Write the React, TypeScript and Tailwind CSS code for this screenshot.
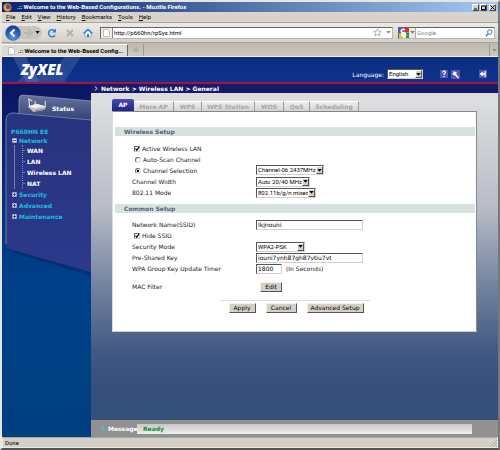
import { useState } from "react";
import type { ReactNode } from "react";
import clsx from "clsx";

const TABS = [
  { label: "More AP", width: "w-[40px]" },
  { label: "WPS", width: "w-[28px]" },
  { label: "WPS Station", width: "w-[53px]" },
  { label: "WDS", width: "w-[29px]" },
  { label: "QoS", width: "w-[26px]" },
  { label: "Scheduling", width: "w-[49px]" },
];

const MENU = ["File", "Edit", "View", "History", "Bookmarks", "Tools", "Help"];
const NETWORK_LINKS = ["WAN", "LAN", "Wireless LAN", "NAT"];
const SECTIONS = ["Security", "Advanced", "Maintenance"];

const FIELD =
  "h-[10px] border border-[#d4d0c8] border-t-[#555] border-l-[#555] bg-white pl-px text-[6px] leading-[8px] text-black outline-none";
const WINDOW_BUTTON =
  "h-[7px] w-[7px] border border-white border-r-[#444] border-b-[#444] bg-[#d4d0c8]";

function Caret({ className }: { className?: string }) {
  return (
    <svg viewBox="0 0 5 3" className={clsx("h-[3px] w-[5px]", className)}>
      <path d="M.3 0h4.400L2.500 2.800z" fill="currentColor" />
    </svg>
  );
}

function PageIcon() {
  return (
    <svg viewBox="0 0 7 8" className="h-[8px] w-[7px] shrink-0">
      <path d="M.5.5h4l2 2v5h-6z" fill="#fff" stroke="#aaa" strokeWidth=".7" />
    </svg>
  );
}

function Select({
  label,
  options,
  className,
}: {
  label: string;
  options: string[];
  className: string;
}) {
  return (
    <span className={clsx("relative inline-flex h-[10px] shrink-0", className)}>
      <select
        aria-label={label}
        className="h-full w-full appearance-none border border-[#d4d0c8] border-t-[#555] border-l-[#555] bg-white pl-px font-[Roboto,sans-serif] text-[6px] leading-[8px] text-black outline-none"
      >
        {options.map((o) => (
          <option key={o}>{o}</option>
        ))}
      </select>
      <span className="pointer-events-none absolute top-px right-px bottom-px flex w-[7px] items-center justify-center border border-white border-r-[#555] border-b-[#555] bg-[#d4d0c8] text-black">
        <Caret />
      </span>
    </span>
  );
}

function Tick({ label }: { label: string }) {
  const [checked, setChecked] = useState(true);
  return (
    <label className="flex h-[11px] items-center gap-[2px] pl-[2px]">
      <span className="grid">
        <input
          type="checkbox"
          checked={checked}
          onChange={(e) => setChecked(e.target.checked)}
          className="col-start-1 row-start-1 h-[6px] w-[6px] appearance-none border border-[#d4d0c8] border-t-[#666] border-l-[#666] bg-white"
        />
        {checked && (
          <svg viewBox="0 0 6 6" className="pointer-events-none col-start-1 row-start-1 h-[6px] w-[6px]">
            <path d="M1.5 2.500l1.200 1.700L5 1.200" fill="none" stroke="#000" strokeWidth="1.100" />
          </svg>
        )}
      </span>
      {label}
    </label>
  );
}

function Radio({
  label,
  checked,
  onChange,
}: {
  label: string;
  checked: boolean;
  onChange: () => void;
}) {
  return (
    <label className="flex h-[11px] w-[124px] items-center gap-[2px] pl-[3px]">
      <span className="grid">
        <input
          type="radio"
          name="channel"
          checked={checked}
          onChange={onChange}
          className="col-start-1 row-start-1 h-[6px] w-[6px] appearance-none rounded-full border border-[#ddd] border-t-[#666] border-l-[#666] bg-white"
        />
        {checked && (
          <svg viewBox="0 0 6 6" className="pointer-events-none col-start-1 row-start-1 h-[6px] w-[6px]">
            <circle cx="3" cy="3" r="1.200" fill="#000" />
          </svg>
        )}
      </span>
      {label}
    </label>
  );
}

function Row({ label, id, children }: { label: string; id?: string; children: ReactNode }) {
  return (
    <div className="flex h-[11px] items-center">
      <label htmlFor={id} className="w-[124px] shrink-0">
        {label}
      </label>
      {children}
    </div>
  );
}

function SectionTitle({ children }: { children: ReactNode }) {
  return (
    <h2 className="mr-px ml-[2px] h-[9px] bg-[#d8e0e0] pl-[9px] text-[6px] leading-[9px] font-bold text-[#50647a]">
      {children}
    </h2>
  );
}

function Button({ children, className }: { children: ReactNode; className: string }) {
  return (
    <button
      type="button"
      className={clsx(
        "h-[10px] border border-[#f2f0ea] border-r-[#555] border-b-[#555] bg-[#d4d0c8] text-center text-[6px] leading-[8px] whitespace-nowrap text-black",
        className,
      )}
    >
      {children}
    </button>
  );
}

function BrowserChrome() {
  return (
    <header className="font-[Roboto,sans-serif] text-[6px] text-black">
      <div className="flex h-[10px] items-center bg-linear-to-r from-[#0a246a] to-[#a6caf0] pr-[2px] pl-px text-white">
        <svg viewBox="0 0 10 10" className="mr-[5px] h-[9px] w-[9px]">
          <circle cx="5" cy="5" r="4.600" fill="#e77817" />
          <circle cx="5.400" cy="4.600" r="2.800" fill="#315ca5" />
          <path d="M1 3c1-1 2 .3 3 .2L3 5c1 2 3 2 5 1-2 4-7 3-7-3z" fill="#f8a43a" />
        </svg>
        <h1 className="flex-1 text-[6px] leading-[10px] font-bold">
          .:: Welcome to the Web-Based Configurations. - Mozilla Firefox
        </h1>
        <div className="flex gap-px">
          <button type="button" aria-label="Minimize" className={WINDOW_BUTTON}>
            <svg viewBox="0 0 5 5" className="h-[5px] w-[5px]"><path d="M1 4h3" stroke="#000" /></svg>
          </button>
          <button type="button" aria-label="Maximize" className={WINDOW_BUTTON}>
            <svg viewBox="0 0 5 5" className="h-[5px] w-[5px]"><path d="M.5 1h4v3.500h-4z" fill="none" stroke="#000" /></svg>
          </button>
          <button type="button" aria-label="Close" className={clsx(WINDOW_BUTTON, "ml-px")}>
            <svg viewBox="0 0 5 5" className="h-[5px] w-[5px]"><path d="M.5.5l4 4m0-4l-4 4" stroke="#000" /></svg>
          </button>
        </div>
      </div>

      <nav className="flex h-[11px] items-center gap-[6px] border-b border-[#aaa69e] bg-[#d8d4cc] pl-[4px] leading-[10px]">
        {MENU.map((m) => (
          <button type="button" key={m}>
            <u>{m[0]}</u>
            {m.slice(1)}
          </button>
        ))}
      </nav>

      <div className="flex h-[19px] items-center bg-linear-to-b from-[#eceae6] to-[#d4d0c8] pr-[3px] pl-[3px]">
        <div className="flex h-[13px] items-center rounded-full bg-[#c8c5be] pr-[2px]">
          <button type="button" aria-label="Back">
            <svg viewBox="0 0 16 16" className="h-[16px] w-[16px]">
              <defs>
                <radialGradient id="back" cx="50%" cy="80%" r="75%">
                  <stop offset="0" stopColor="#4a9be8" />
                  <stop offset="1" stopColor="#1735a0" />
                </radialGradient>
              </defs>
              <circle cx="8" cy="8" r="7.500" fill="url(#back)" stroke="#6277b5" strokeWidth=".6" />
              <path d="M9.500 4.500L6 8l3.500 3.500" fill="none" stroke="#fff" strokeWidth="2" />
            </svg>
          </button>
          <button type="button" aria-label="Forward" className="ml-px">
            <svg viewBox="0 0 12 10" className="h-[10px] w-[12px]">
              <path d="M6 1.500L10 5 6 8.500M10 5H2" fill="none" stroke="#b9b7b1" strokeWidth="1.800" />
            </svg>
          </button>
          <Caret className="ml-px" />
        </div>
        <button type="button" aria-label="Reload" className="ml-[5px]">
          <svg viewBox="0 0 10 10" className="h-[10px] w-[10px]">
            <path d="M8 7.200A3.500 3.500 0 1 1 7.300 2.500" fill="none" stroke="#2f7fd8" strokeWidth="1.600" />
            <path d="M9 .5v4H5z" fill="#2f7fd8" />
          </svg>
        </button>
        <button type="button" aria-label="Stop" className="ml-[8px]">
          <svg viewBox="0 0 10 10" className="h-[10px] w-[10px]">
            <path d="M2 2l6 6m0-6L2 8" stroke="#b3b0a9" strokeWidth="1.800" />
          </svg>
        </button>
        <button type="button" aria-label="Home" className="mr-[7px] ml-[8px]">
          <svg viewBox="0 0 10 10" className="h-[10px] w-[10px]">
            <path d="M2 5v4h6V5L5 2z" fill="#f4f8ff" stroke="#79a5dc" strokeWidth=".8" />
            <path d="M.6 5.500L5 1.500l4.400 4" fill="none" stroke="#2f78cc" strokeWidth="1.500" />
            <path d="M4 6h2v3H4z" fill="#2f78cc" />
          </svg>
        </button>
        <div className="flex h-[12px] flex-1 items-center border border-[#bbb8b0] border-t-[#666] border-l-[#666] bg-white">
          <span className="flex h-full w-[12px] items-center justify-center border-r border-[#888] bg-[#eceae6]">
            <PageIcon />
          </span>
          <input
            aria-label="Address"
            defaultValue="http://p660hn/rpSys.html"
            className="h-full min-w-0 flex-1 pl-px text-[6px] leading-[10px] outline-none"
          />
          <svg viewBox="0 0 10 10" className="h-[9px] w-[9px]">
            <path d="M5 .8l1.200 2.800 3 .2-2.300 2 .8 3L5 7.200 2.300 8.800l.8-3-2.300-2 3-.2z" fill="#fff" stroke="#888" strokeWidth=".7" />
          </svg>
          <Caret className="mr-px ml-[4px] text-[#888]" />
        </div>
        <div className="ml-[5px] flex h-[12px] w-[97px] items-center border border-[#bbb8b0] border-t-[#666] border-l-[#666] bg-white">
          <button type="button" aria-label="Search engine" className="flex h-full w-[17px] items-center border-r border-[#aaa] bg-[#eceae6]">
            <svg viewBox="0 0 9 9" className="h-[10px] w-[10px]">
              <path d="M0 0h4v5H0z" fill="#2860d0" />
              <path d="M4 0h5v4H4z" fill="#d93125" />
              <path d="M6 4h3v5H6z" fill="#259742" />
              <path d="M0 5h4v4H0z" fill="#efc22d" />
              <path d="M4 5h2v4H4z" fill="#fff" />
              <path d="M5.200 2A1.700 1.500 0 1 0 4.500 4c-2.500.8-2.500 3 0 3.300S6.200 5 4.500 4" fill="none" stroke="#fff" strokeWidth="1.400" />
            </svg>
            <Caret className="ml-px text-[#777]" />
          </button>
          <input
            aria-label="Search"
            placeholder="Google"
            className="h-full min-w-0 flex-1 pl-px text-[6px] outline-none placeholder:text-[#888]"
          />
          <svg viewBox="0 0 8 8" className="mr-px h-[8px] w-[8px]">
            <circle cx="4.800" cy="3" r="2.200" fill="none" stroke="#3b78bd" />
            <path d="M3.200 4.700L.8 7.300" stroke="#3b78bd" strokeWidth="1.300" />
          </svg>
        </div>
      </div>

      <div className="flex h-[15px] items-end justify-between border-t border-b border-[#aaa69e] border-b-[#f4f2ee] bg-linear-to-b from-[#bdb9b1] to-[#cdc9c1]">
        <div className="flex items-end">
          <div className="flex h-[12px] w-[126px] items-center border-t border-r border-t-white border-r-[#666] bg-[#dedbd4] pl-[6px]">
            <PageIcon />
            <span className="ml-[3px] leading-[11px] font-bold whitespace-nowrap">
              .:: Welcome to the Web-Based Config...
            </span>
          </div>
          <button type="button" aria-label="New tab" className="flex h-[12px] w-[16px] items-center justify-center border-r border-[#999]">
            <svg viewBox="0 0 6 6" className="h-[6px] w-[6px]"><path d="M3 0v6M0 3h6" stroke="#aaa" strokeWidth="1.500" /></svg>
          </button>
        </div>
        <button type="button" aria-label="List all tabs" className="flex h-[12px] w-[9px] items-center justify-center border-l border-[#999] text-[#888]">
          <Caret />
        </button>
      </div>
    </header>
  );
}

function Banner() {
  return (
    <div className="relative flex h-[27px] items-start border-b-2 border-[#a51440] bg-linear-to-b from-[#0b2d7f] to-[#10328c] text-[6px] text-white">
      <svg viewBox="0 0 90 25" className="absolute top-0 left-0 h-[25px] w-[90px]">
        <path d="M11 0h13l13 25H24z" fill="#6681bd" opacity=".35" />
        <path d="M62 0h17L62 25H15l8-8h27z" fill="#6681bd" opacity=".3" />
      </svg>
      <span className="relative flex-1 pt-[2px] pl-[19px] font-['Open_Sans',sans-serif] text-[15px] leading-[20px] font-extrabold italic">
        ZyXEL
      </span>
      <div className="flex items-center pt-[12px]">
        <span className="mr-[3px]">Language:</span>
        <Select label="Language" options={["English"]} className="w-[36px]" />
        <button type="button" aria-label="Help" className="ml-[17px] h-[8px] w-[8px] bg-[#5752b5]">
          <svg viewBox="0 0 8 8"><path d="M2.500 2.500C3-.2 6.800 1 5 3.300 4 4 4 4 4 5M4 6v1.200" fill="none" stroke="#fff" strokeWidth="1.200" /></svg>
        </button>
        <button type="button" aria-label="Wizard" className="ml-[3px] h-[9px] w-[9px] bg-[#5752b5]">
          <svg viewBox="0 0 9 9"><path d="M3.500 3.500L7.500 8" stroke="#fff" strokeWidth="1.400" /><path d="M3 .5l1 1.700 2-.5-1 1.800L6 5 4 4.700 3 6.300 2.500 4.500.8 4l1.500-1z" fill="#fff" /></svg>
        </button>
        <button type="button" aria-label="Logout" className="mr-[11px] ml-[19px] h-[8px] w-[8px] bg-[#5752b5]">
          <svg viewBox="0 0 8 8"><path d="M5.500 1.200h1v5.500h-1M.8 4l2.500-2v1.200h2v1.600h-2V6z" fill="#fff" stroke="#fff" strokeWidth=".5" /></svg>
        </button>
      </div>
    </div>
  );
}

function TreeBox({ open }: { open?: boolean }) {
  return (
    <svg viewBox="0 0 5 5" className="relative h-[5px] w-[5px]">
      <path d="M.3.3h4.400v4.400H.3z" fill="#e5e5f5" stroke="#8b8bb5" strokeWidth=".6" />
      <path d={open ? "M1 2.500h3" : "M1 2.500h3M2.500 1v3"} stroke="#222b70" strokeWidth=".8" />
    </svg>
  );
}

function Sidebar() {
  return (
    <aside className="relative w-[89px] shrink-0 bg-[linear-gradient(#0a1662,#0a2c78_30%,#00408a_55%,#004080)] pt-[14px] text-[6px] font-bold">
      {/* folder shape behind the menu */}
      <svg viewBox="0 0 89 196" className="absolute top-0 left-0 h-[196px] w-[89px]">
        <defs>
          <linearGradient id="statusTab" x1="0" y1="0" x2="0" y2="1">
            <stop offset="0" stopColor="#66739a" />
            <stop offset="1" stopColor="#2c3a72" />
          </linearGradient>
          <linearGradient id="folder" x1="0" y1="0" x2="0" y2="1">
            <stop offset="0" stopColor="#28337e" />
            <stop offset="1" stopColor="#2c398c" />
          </linearGradient>
        </defs>
        <path d="M10 168L89 192v-6L10 160z" fill="#00265f" opacity=".5" />
        <path d="M17 38V15q0-4 4-4l68 6v23z" fill="url(#statusTab)" />
        <path d="M17 30V15q0-4 4-4l68 6" fill="none" stroke="#8b96b5" strokeWidth=".8" />
        <path d="M4 37q0-8 7-8l78 7v152L7 165q-3-1-3-5z" fill="url(#folder)" />
        <path d="M4 160V37q0-8 7-8l78 7" fill="none" stroke="#7683b3" strokeWidth=".9" />
      </svg>
      <a href="#status" className="relative flex h-[17px] items-start pl-[24px] text-white">
        <svg viewBox="0 0 24 16" className="mr-[4px] h-[15px] w-[22px]">
          <path d="M2 9l10-3 10 3-2 4-12 2z" fill="#bfc2bd" />
          <path d="M2 9l7 2 13-2-11-3z" fill="#f1f0e9" />
          <path d="M4 9L3 1l4 2m3 4V3m11 6V3" fill="none" stroke="#e2e2da" strokeWidth="1.200" />
          <path d="M10 14l10-2" stroke="#777c84" />
        </svg>
        <span className="pt-[7px] leading-[8px]">Status</span>
      </a>
      <nav className="relative pt-[12px] pl-[9px] text-[#18bfe8]">
        <a href="#device" className="block h-[9px] leading-[9px]">
          P660HN EE
        </a>
        <a href="#network" className="flex h-[9px] items-center gap-[2px] pl-px">
          <TreeBox open />
          Network
        </a>
        <div className="ml-[3px] border-l border-[#7580b0]">
          <ul className="ml-[7px] border-l border-dotted border-[#8490bf] text-white">
            {NETWORK_LINKS.map((l) => (
              <li key={l} className="flex h-[11px] items-center">
                <span className="mr-[2px] w-[2px] border-t border-[#7580b0]" />
                <a href={`#${l}`}>{l}</a>
              </li>
            ))}
          </ul>
        </div>
        {SECTIONS.map((s) => (
          <a key={s} href={`#${s}`} className="flex h-[11px] items-center gap-[2px] pl-px">
            <TreeBox />
            {s}
          </a>
        ))}
      </nav>
    </aside>
  );
}

function SetupForm() {
  const [channel, setChannel] = useState("manual");
  return (
    <form className="border border-[#888] border-b-[#ccc] border-l-[#ddd] bg-white pt-[15px] pb-[18px] text-[6px] leading-[9px] text-[#222]">
      <SectionTitle>Wireless Setup</SectionTitle>
      <div className="pt-[7px] pb-[6px] pl-[19px]">
        <Tick label="Active Wireless LAN" />
        <Radio label="Auto-Scan Channel" checked={channel === "auto"} onChange={() => setChannel("auto")} />
        <div className="flex">
          <Radio label="Channel Selection" checked={channel === "manual"} onChange={() => setChannel("manual")} />
          <Select label="Channel" options={["Channel-06 2437MHz"]} className="w-[68px]" />
        </div>
        <Row label="Channel Width">
          <Select label="Channel Width" options={["Auto 20/40 MHz"]} className="w-[54px]" />
        </Row>
        <Row label="802.11 Mode">
          <Select label="802.11 Mode" options={["802.11b/g/n mixed"]} className="w-[60px]" />
        </Row>
      </div>
      <SectionTitle>Common Setup</SectionTitle>
      <div className="pt-[6px] pl-[19px]">
        <Row label="Network Name(SSID)" id="ssid">
          <input id="ssid" defaultValue="lkjnouni" className={clsx(FIELD, "w-[107px]")} />
        </Row>
        <Tick label="Hide SSID" />
        <Row label="Security Mode">
          <Select label="Security Mode" options={["WPA2-PSK"]} className="w-[49px]" />
        </Row>
        <Row label="Pre-Shared Key" id="psk">
          <input id="psk" defaultValue="iouni7ynh87gh87vtiu7vt" className={clsx(FIELD, "w-[107px]")} />
        </Row>
        <Row label="WPA Group Key Update Timer" id="timer">
          <input id="timer" defaultValue="1800" className={clsx(FIELD, "mr-[4px] w-[26px]")} />
          (In Seconds)
        </Row>
        <div className="mt-[7px]">
          <Row label="MAC Filter">
            <Button className="ml-[4px] w-[22px]">Edit</Button>
          </Row>
        </div>
      </div>
      <div className="mx-auto mt-[8px] flex w-[150px] justify-between border-t border-[#ddd] pt-[2px] pr-[6px] pl-[9px]">
        <Button className="w-[27px]">Apply</Button>
        <Button className="w-[31px]">Cancel</Button>
        <Button className="w-[57px]">Advanced Setup</Button>
      </div>
    </form>
  );
}

export default function App() {
  return (
    <div className="flex min-h-screen flex-col border-2 border-[#e8e5de] border-r-[#777] border-b-[#555] bg-[#d4d0c8] font-['DejaVu_Sans',sans-serif]">
      <BrowserChrome />
      <Banner />
      <div className="flex flex-1">
        <Sidebar />
        <main className="flex min-w-0 flex-1 flex-col bg-[linear-gradient(#dcdddf_5%,#b8bcc6_35%,#7686a2_56%,#405882_76%,#35507a_86%)]">
          <div className="flex h-[9px] items-center bg-[#141b67] pl-[3px] text-[6px] font-bold text-white">
            <svg viewBox="0 0 5 6" className="mr-[3px] h-[5px] w-[4px]">
              <path d="M1 .5L4 3 1 5.500" fill="none" stroke="#fff" />
            </svg>
            Network &gt; Wireless LAN &gt; General
          </div>
          <div className="flex-1 px-[21px] pt-[6px] pb-[88px]">
            <div role="tablist" className="flex h-[12px] items-end text-[6px] font-bold">
              <button
                type="button"
                role="tab"
                aria-selected="true"
                className="h-full w-[22px] rounded-t-[2px] bg-linear-to-b from-[#4a4cae] to-[#202389] leading-[12px] text-white"
              >
                AP
              </button>
              {TABS.map((t) => (
                <button
                  type="button"
                  role="tab"
                  key={t.label}
                  className={clsx(
                    "h-[10px] border-t border-r border-t-white border-r-[#999] bg-linear-to-b from-[#eee] to-[#d2d2d2] leading-[9px] whitespace-nowrap text-[#a7a7a7]",
                    t.width,
                  )}
                >
                  {t.label}
                </button>
              ))}
            </div>
            <SetupForm />
          </div>
          <div className="flex h-[17px] items-center bg-[#919191] pr-[26px] pl-[10px] text-[6px] font-bold text-white">
            <span className="mr-[4px] h-[5px] w-[3px] shrink-0 bg-[#5fb5b0]" />
            <span className="w-[29px]">Message</span>
            <output className="h-[10px] flex-1 bg-linear-to-b from-[#c8c8c8] to-[#eee] pl-[6px] leading-[10px] text-[#168a32]">
              Ready
            </output>
          </div>
        </main>
      </div>
      <footer className="flex h-[11px] items-center border border-[#eeeae2] border-t-[#aaa69e] pl-[2px] font-[Roboto,sans-serif] text-[6px] text-black">
        <span className="flex-1">Done</span>
        <svg viewBox="0 0 8 8" className="h-[8px] w-[8px]">
          <path d="M1 8l7-7M4 8l4-4M7 8l1-1" stroke="#aaa" />
        </svg>
      </footer>
    </div>
  );
}
